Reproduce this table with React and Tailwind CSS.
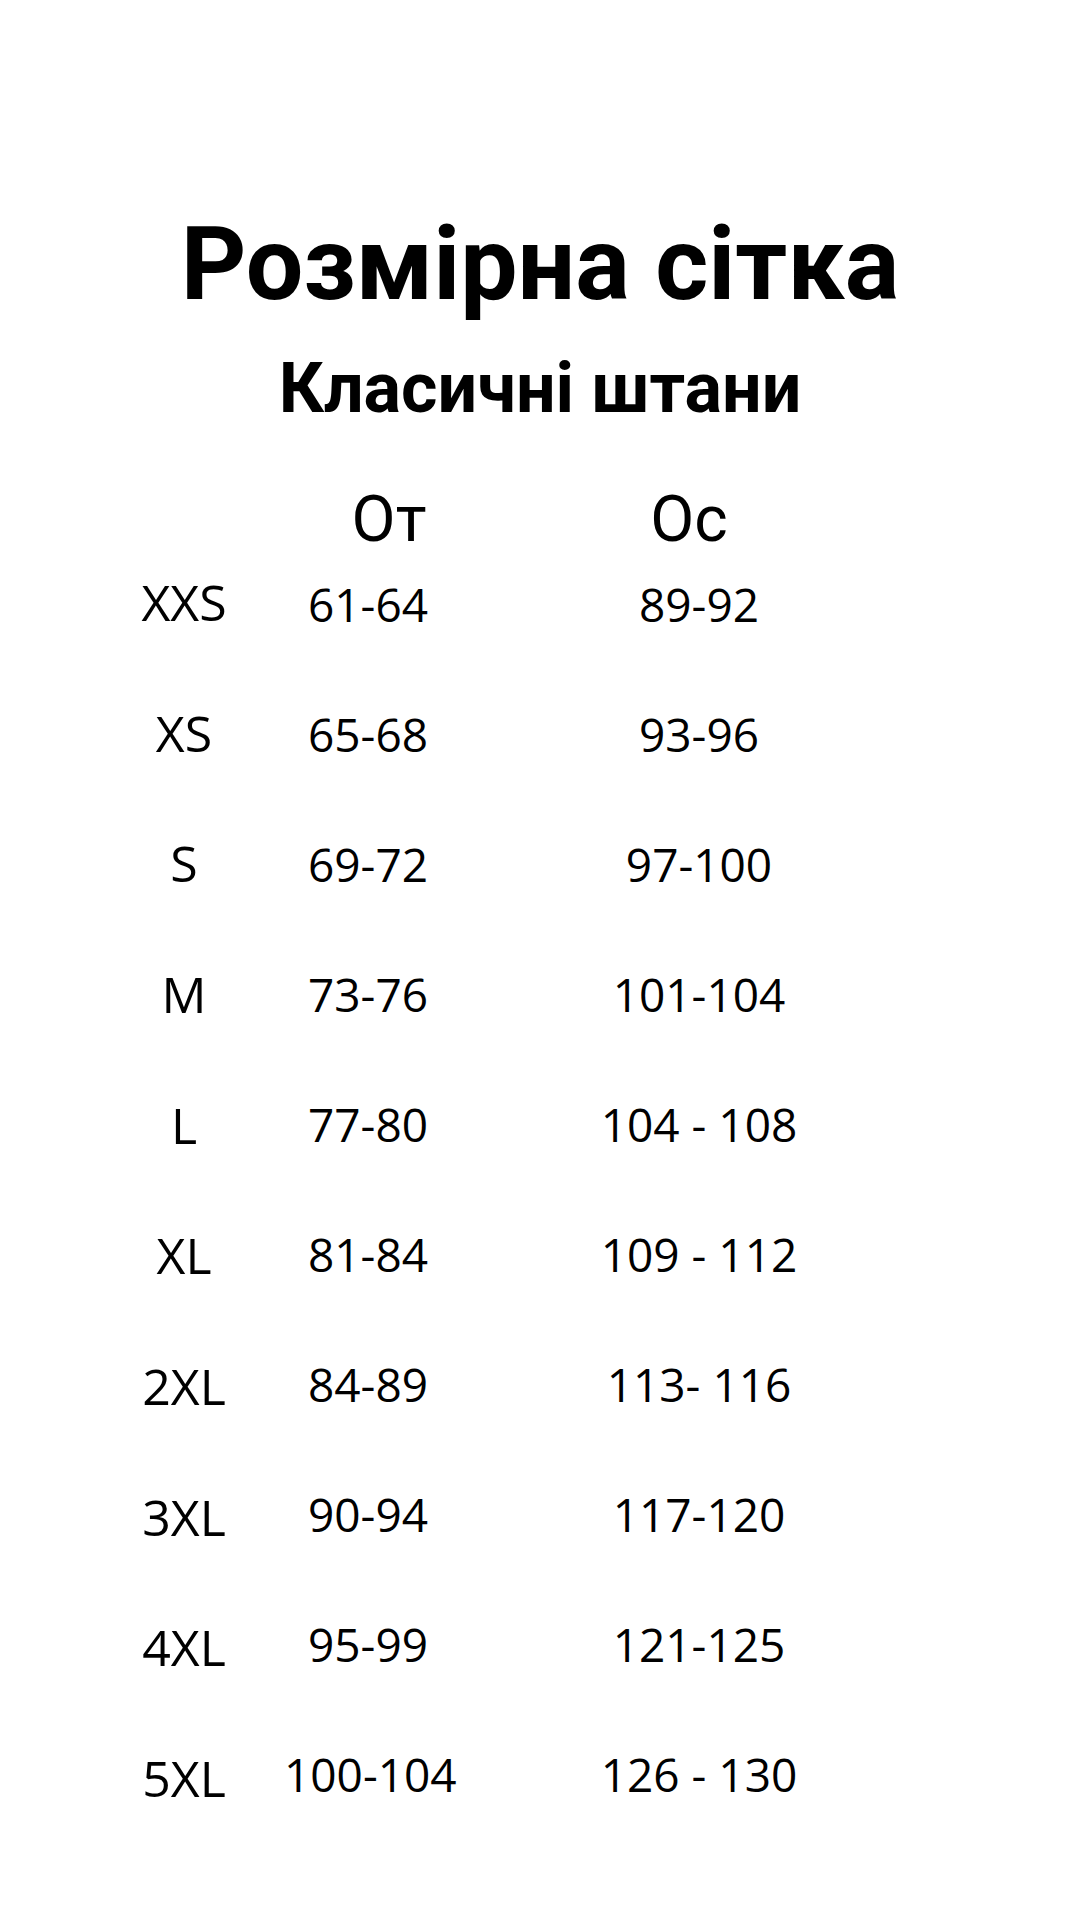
const rows = [
  ['XXS', '61-64', '89-92'],
  ['XS', '65-68', '93-96'],
  ['S', '69-72', '97-100'],
  ['M', '73-76', '101-104'],
  ['L', '77-80', '104 - 108'],
  ['XL', '81-84', '109 - 112'],
  ['2XL', '84-89', '113- 116'],
  ['3XL', '90-94', '117-120'],
  ['4XL', '95-99', '121-125'],
  ['5XL', '100-104', '126 - 130'],
];

export default function App() {
  return (
    <div className="w-[1080px] h-[1920px] bg-white text-black flex flex-col items-center pt-[213px]">
      <h1 className="font-['Roboto',sans-serif] font-bold text-[102px] leading-none">
        Розмірна сітка
      </h1>
      <h2 className="font-['Roboto',sans-serif] font-bold text-[70px] leading-none mt-[38px]">
        Класичні штани
      </h2>

      <div className="self-start pl-[84px] mt-[65px] font-['Open_Sans',sans-serif]">
        <div className="grid grid-cols-[200px_168px_494px] font-['Roboto',sans-serif] text-[64px] leading-none">
          <div />
          <div className="text-center pl-[42px]">От</div>
          <div className="text-center pr-[20px]">Ос</div>
        </div>

        {/* size labels run on a slightly larger step than the numbers */}
        <div className="grid grid-cols-[200px_168px_494px] mt-[25px] leading-none whitespace-nowrap">
          <div className="flex flex-col text-[50px]">
            {rows.map(([size]) => (
              <div key={size} className="h-[130.67px] text-center">{size}</div>
            ))}
          </div>
          <div className="flex flex-col text-[46px] pt-[4px]">
            {rows.map(([size, waist]) => (
              <div key={size} className="h-[130px] text-center">{waist}</div>
            ))}
          </div>
          <div className="flex flex-col text-[46px] pt-[4px]">
            {rows.map(([size, , hips]) => (
              <div key={size} className="h-[130px] text-center">{hips}</div>
            ))}
          </div>
        </div>
      </div>
    </div>
  );
}
